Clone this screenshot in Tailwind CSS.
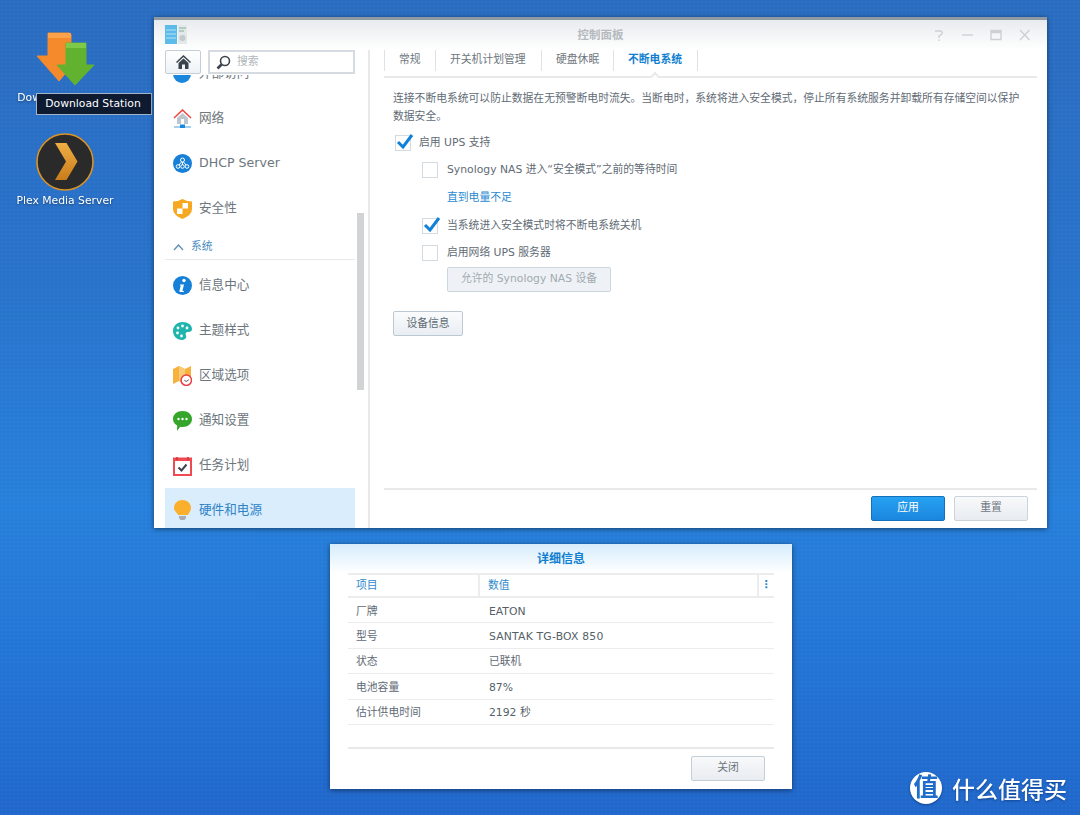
<!DOCTYPE html>
<html lang="zh-CN">
<head>
  <meta charset="UTF-8" />
  <title>控制面板</title>
  <script src="https://cdn.jsdelivr.net/npm/@tailwindcss/browser@4"></script>
</head>
<body class="m-0 overflow-hidden">
  <div class="relative w-[1080px] h-[815px] overflow-hidden bg-[linear-gradient(180deg,#2a6cc0_0%,#2873cb_35%,#2780db_62%,#2272d3_85%,#2067cb_100%)] font-['DejaVu_Sans','Noto_Sans_CJK_SC',sans-serif] text-[10.8px] text-[#5f6b75]">
    <div class="absolute inset-0 bg-[radial-gradient(rgba(255,255,255,0.03)_1px,transparent_1px)] bg-[size:4px_4px]"></div>

    <!-- Desktop icons -->
    <div class="absolute left-0 top-[32px] w-[130px] flex flex-col items-center text-white text-[10.8px]">
      <svg class="w-[58px] h-[54px]" viewBox="0 0 58 54">
        <path d="M12 1h21a2 2 0 0 1 2 2v21h9L23 49 1 24h11z" fill="#f48a2b" stroke="#f48a2b" stroke-linejoin="round"/>
        <path d="M12 1h23v5H12z" fill="#fba24a"/>
        <path d="M30 11h20v22h8L39 53 21 33h9z" fill="#62b22f" stroke="#62b22f" stroke-linejoin="round"/>
        <path d="M30 11h20v5H30z" fill="#7fc948"/>
      </svg>
      <span class="mt-[5px] leading-[14px] whitespace-nowrap drop-shadow-[0_1px_1px_rgba(0,0,0,0.4)]">Download Station</span>
      <svg class="mt-[28px] w-[58px] h-[58px]" viewBox="0 0 58 58">
        <defs>
          <linearGradient id="plexChevron" x1="0" y1="0" x2="0" y2="1">
            <stop offset="0" stop-color="#eeae45"/>
            <stop offset="1" stop-color="#c97c1b"/>
          </linearGradient>
        </defs>
        <circle cx="29" cy="29" r="28" fill="#2a2a2a" stroke="#d99327" stroke-width="1.6"/>
        <path d="M19 10h11.500l11 18.500-11 18.500H19l11-18.500z" fill="url(#plexChevron)"/>
      </svg>
      <span class="mt-[3px] leading-[14px] whitespace-nowrap drop-shadow-[0_1px_1px_rgba(0,0,0,0.4)]">Plex Media Server</span>
    </div>
    <div class="absolute left-[36px] top-[93px] w-[116px] h-[22px] pr-[2px] bg-[#0d1a30] border border-[#a3b4cb] text-white text-[10.8px] leading-[20px] text-center whitespace-nowrap">Download Station</div>

    <!-- Control panel window -->
    <div class="absolute left-[154px] top-[17px] w-[893px] h-[511px] bg-white border-t-[3px] border-[#8f9aa3] shadow-[0_1px_5px_rgba(0,0,0,0.5)] flex flex-col overflow-hidden">
      <div class="relative h-[30px] shrink-0 bg-[linear-gradient(180deg,#e8ebee,#ffffff)]">
        <svg class="absolute left-[11px] top-[5px] w-[22px] h-[19px]" viewBox="0 0 22 19">
          <rect width="12" height="19" fill="#5cbbe9"/>
          <path d="M1 5h10M1 9h10M1 13h10" stroke="#b4e1f6"/>
          <rect x="13" width="9" height="19" fill="#e3e8e9"/>
          <path d="M14 3h7M14 6h5" stroke="#7fb09c"/>
          <circle cx="17.500" cy="13" r="3" fill="#c2cace"/>
        </svg>
        <div class="text-center font-bold text-[#b5babf] text-[11.5px] leading-[30px]">控制面板</div>
        <svg class="absolute left-[778px] top-[8px] w-[100px] h-[14px]" viewBox="0 0 100 14" fill="none" stroke="#cdd1d4" stroke-width="1.4">
          <path d="M3 3h5.500a1.800 1.800 0 0 1 1 3.300L7 8v2M7 11.500V13"/>
          <path d="M30 7h11"/>
          <path d="M59 2.500h10v9H59z"/><path d="M59 4h10" stroke-width="2.500"/>
          <path d="M88 2l9.500 10M97.500 2L88 12"/>
        </svg>
      </div>

      <div class="flex flex-1 min-h-0">
        <!-- Sidebar -->
        <aside class="relative w-[216px] shrink-0 border-r-2 border-[#e8e9ea] overflow-hidden text-[12.6px] text-[#6d767d]">
          <ul class="absolute left-[11px] top-[0px] w-[190px]">
            <li class="h-[45px] flex items-center gap-[8px] pl-[8px] mt-[1px]">
              <span class="w-[18px] h-[18px] rounded-full bg-[#1b87dc]"></span>外部访问
            </li>
            <li class="h-[45px] flex items-center gap-[7px] pl-[8px]">
              <svg class="w-[19px] h-[20px]" viewBox="0 0 19 20"><path d="M1 9l8.500-8L18 9" fill="none" stroke="#ef4b45" stroke-width="1.600"/><path d="M4 9l5.500-5L15 9v6H4z" fill="#bcc6cf"/><rect x="8" y="10" width="3" height="5" fill="#fff"/><path d="M1 18h17" stroke="#4aa0dc"/><rect x="7" y="15.500" width="5" height="3.500" fill="#1b87dc"/></svg>
              网络
            </li>
            <li class="h-[45px] flex items-center gap-[7px] pl-[8px]">
              <svg class="w-[19px] h-[19px]" viewBox="0 0 19 19"><circle cx="9.500" cy="9.500" r="9.500" fill="#1680d8"/><g fill="none" stroke="#fff"><circle cx="9.500" cy="6" r="2"/><circle cx="5" cy="12.500" r="1.800"/><circle cx="9.500" cy="12.500" r="1.800"/><circle cx="14" cy="12.500" r="1.800"/><path d="M8.500 8L6 11M10.500 8l2.500 3M9.500 8v3"/></g></svg>
              DHCP Server
            </li>
            <li class="h-[45px] flex items-center gap-[7px] pl-[8px]">
              <svg class="w-[19px] h-[20px]" viewBox="0 0 19 20"><path d="M0 2.500Q5 2.500 9.500 0 14 2.500 19 2.500V10q0 6-9.500 10Q0 16 0 10z" fill="#f6a821"/><path d="M9.500 4h5.500v5.500H9.500zM4 9.500h5.500V15H4z" fill="#fff"/></svg>
              安全性
            </li>
            <li class="h-[29px] mb-[3px] pt-[5px] flex items-center border-b border-[#e6e8ea] text-[10.8px] text-[#4a8bbd] pl-[8px] gap-[7px]">
              <svg class="w-[11px] h-[7px]" viewBox="0 0 11 7"><path d="M1 6l4.500-5L10 6" fill="none" stroke="#5b8fb4" stroke-width="1.300"/></svg>
              系统
            </li>
            <li class="h-[45px] flex items-center gap-[7px] pl-[8px]">
              <svg class="w-[19px] h-[19px]" viewBox="0 0 19 19"><circle cx="9.500" cy="9.500" r="9.500" fill="#1680d8"/><circle cx="11" cy="4.500" r="1.700" fill="#fff"/><path d="M7 8.500h4l-1.500 6q0 .8 1.500.5l-.3 1H7.500q-1.500 0-1-1.500l1.300-5H7z" fill="#fff"/></svg>
              信息中心
            </li>
            <li class="h-[45px] flex items-center gap-[7px] pl-[8px]">
              <svg class="w-[19px] h-[18px]" viewBox="0 0 19 18"><path d="M9.500 0C15 0 19 3 19 7c0 3-3 3-4.500 3S12 11.500 13 13.500 12 18 9 18C4 18 0 14 0 9s4-9 9.500-9z" fill="#1fb5ad"/><g fill="#fff"><circle cx="5" cy="6" r="1.400"/><circle cx="9.500" cy="4" r="1.400"/><circle cx="14" cy="6" r="1.400"/><circle cx="4.500" cy="11" r="1.400"/><circle cx="8.500" cy="14" r="1.400"/></g></svg>
              主题样式
            </li>
            <li class="h-[45px] flex items-center gap-[7px] pl-[8px]">
              <svg class="w-[19px] h-[20px]" viewBox="0 0 19 20"><path d="M0 3l6-3v15l-6 3zM6 0l6 3v15l-6-3zM12 3l6-3v15l-6 3z" fill="#f7b13d"/><path d="M6 0l6 3v15l-6-3z" fill="#fbca76"/><circle cx="13.300" cy="14.200" r="5.200" fill="#fff" stroke="#ea4048" stroke-width="1.500"/><path d="M11.300 14.200l2 1.300 2.500-1.800" fill="none" stroke="#555"/></svg>
              区域选项
            </li>
            <li class="h-[45px] flex items-center gap-[7px] pl-[8px]">
              <svg class="w-[19px] h-[20px]" viewBox="0 0 19 20"><path d="M9.500 0C15 0 19 3.500 19 8s-4 8-9.500 8c-.8 0-1.500 0-2.300-.2L4 20l.2-5.500C1.500 13 0 10.700 0 8 0 3.500 4 0 9.500 0z" fill="#36a62a"/><g fill="#fff"><circle cx="5.500" cy="8" r="1.200"/><circle cx="9.500" cy="8" r="1.200"/><circle cx="13.500" cy="8" r="1.200"/></g></svg>
              通知设置
            </li>
            <li class="h-[45px] flex items-center gap-[7px] pl-[8px]">
              <svg class="w-[19px] h-[20px]" viewBox="0 0 19 20"><rect x="1" y="2.500" width="17" height="16.500" fill="#fff" stroke="#ee4a50" stroke-width="2"/><rect y="2" width="19" height="3" fill="#ee4a50"/><path d="M4 1v3M15 1v3" stroke="#c9353b" stroke-width="1.500"/><path d="M5.500 11.500l3 3 5-6" fill="none" stroke="#3d4650" stroke-width="2"/></svg>
              任务计划
            </li>
            <li class="h-[40px] pt-[5px] flex items-center gap-[8px] pl-[9px] bg-[#d9edfd] text-[#2f83c6]">
              <svg class="w-[17px] h-[21px]" viewBox="0 0 17 21"><path d="M8.500 0C13 0 17 3 17 8c0 3-2 4.500-3 7H4c-1-2.500-4-4-4-7 0-5 4-8 8.500-8z" fill="#fbb02d"/><path d="M5 16h7v2l-1.500 2h-4L5 18z" fill="#a7adb2"/></svg>
              硬件和电源
            </li>
          </ul>
          <!-- Home and search sit on top of the scrolled list -->
          <div class="absolute left-0 top-0 w-full h-[25px] bg-white flex items-start pl-[11px] gap-[7px]">
            <div class="w-[36px] h-[24px] flex items-center justify-center rounded-[2px] border border-[#c3ced6] bg-[linear-gradient(180deg,#ffffff,#eef2f6)]">
              <svg class="w-[15px] h-[14px]" viewBox="0 0 15 14"><path d="M7.500 0L15 7l-1 1-6.500-6L1 8 0 7z" fill="#3a434b"/><path d="M2.500 8l5-4.500 5 4.500v6H9V9.500H6V14H2.500z" fill="#3a434b"/></svg>
            </div>
            <div class="w-[147px] h-[24px] border-2 border-[#d5dbe0] flex items-center pl-[6px] gap-[6px] text-[#b1b6bb] text-[10.8px]">
              <svg class="w-[15px] h-[15px]" viewBox="0 0 15 15" fill="none" stroke="#3a434b"><circle cx="9" cy="6" r="4.500" stroke-width="1.600"/><path d="M5.500 9.500L1.500 13.500" stroke-width="2.600"/></svg>
              搜索
            </div>
          </div>
          <div class="absolute left-[203px] top-[163px] w-[7px] h-[177px] bg-[#d2d3d4]"></div>
        </aside>

        <!-- Right pane -->
        <main class="flex-1 min-w-0 flex flex-col pl-[14px] pr-[10px]">
          <div class="h-[28px] shrink-0 flex items-start border-b-2 border-[#e8e9ea] text-[#6d767d]">
            <span class="h-[21px] flex items-center border-l border-[#dfe2e4] pl-[14px] pr-[14px] w-[51px]">常规</span>
            <span class="h-[21px] flex items-center border-l border-[#dfe2e4] pl-[14px] w-[106px]">开关机计划管理</span>
            <span class="h-[21px] flex items-center border-l border-[#dfe2e4] pl-[14px] w-[72px]">硬盘休眠</span>
            <span class="relative h-[21px] flex items-center border-x border-[#dfe2e4] pl-[14px] w-[85px] font-bold text-[#107fd0]">不断电系统
              <i class="absolute left-[38px] top-[23px] w-[6px] h-[6px] rotate-45 bg-white border-l-2 border-t-2 border-[#e8e9ea]"></i>
            </span>
          </div>
          <div class="flex-1 min-h-0 pl-[9px] pt-[12px]">
            <p class="w-[632px] leading-[18px]">连接不断电系统可以防止数据在无预警断电时流失。当断电时，系统将进入安全模式，停止所有系统服务并卸载所有存储空间以保护数据安全。</p>
            <label class="mt-[8px] ml-[2px] h-[18px] flex items-center gap-[8px]">
              <span class="relative w-[16px] h-[16px] border border-[#d3dae0] bg-white">
                <svg class="absolute left-[0px] top-[-2px] w-[18px] h-[16px]" viewBox="0 0 18 16"><path d="M2 8l5 5 9-12" fill="none" stroke="#0f81d8" stroke-width="3"/></svg>
              </span>启用 UPS 支持
            </label>
            <div class="pl-[29px]">
              <label class="mt-[9px] h-[18px] flex items-center gap-[9px]">
                <span class="w-[16px] h-[16px] border border-[#d3dae0] bg-white"></span>Synology NAS 进入“安全模式”之前的等待时间
              </label>
              <a class="block mt-[10px] ml-[25px] leading-[18px] text-[#2a8ad2]">直到电量不足</a>
              <label class="mt-[10px] h-[18px] flex items-center gap-[9px]">
                <span class="relative w-[16px] h-[16px] border border-[#d3dae0] bg-white">
                  <svg class="absolute left-[0px] top-[-2px] w-[18px] h-[16px]" viewBox="0 0 18 16"><path d="M2 8l5 5 9-12" fill="none" stroke="#0f81d8" stroke-width="3"/></svg>
                </span>当系统进入安全模式时将不断电系统关机
              </label>
              <label class="mt-[9px] h-[18px] flex items-center gap-[9px]">
                <span class="w-[16px] h-[16px] border border-[#d3dae0] bg-white"></span>启用网络 UPS 服务器
              </label>
              <button class="block mt-[5px] ml-[25px] w-[164px] h-[25px] rounded-[2px] border border-[#ccd6de] bg-[#eef2f6] text-[#a3aab0]">允许的 Synology NAS 设备</button>
            </div>
            <button class="block mt-[19px] w-[70px] h-[25px] pt-[1px] rounded-[2px] border border-[#bcc8d2] bg-[linear-gradient(180deg,#fafbfc,#e9eef3)] text-[#5f6b75]">设备信息</button>
          </div>
          <div class="h-[40px] shrink-0 border-t-2 border-[#e8e9ea] flex justify-end items-start pt-[6px] pr-[9px] gap-[9px]">
            <button class="w-[74px] h-[25px] rounded-[2px] border border-[#1470b8] bg-[linear-gradient(180deg,#27a2f2,#1b86de)] text-white">应用</button>
            <button class="w-[74px] h-[25px] rounded-[2px] border border-[#ccd3da] bg-[linear-gradient(180deg,#f8f9fa,#e8ecf1)] text-[#6d767d]">重置</button>
          </div>
        </main>
      </div>
    </div>

    <!-- Details dialog -->
    <div class="absolute left-[330px] top-[544px] w-[462px] h-[245px] bg-white shadow-[0_1px_5px_rgba(0,0,0,0.5)] flex flex-col">
      <div class="h-[29px] shrink-0 bg-[linear-gradient(180deg,#d6ecfb,#ffffff)] text-center font-bold text-[12px] leading-[30px] text-[#107fd0]">详细信息</div>
      <div class="mx-[18px]">
        <div class="h-[25px] flex items-center border-y-2 border-[#ebeced] text-[#2f8acb]">
          <span class="w-[132px] h-full flex items-center border-r-2 border-[#ebeced] pl-[8px] pt-[2px]">项目</span>
          <span class="flex-1 h-full flex items-center border-r-2 border-[#ebeced] pl-[8px] pt-[2px]">数值</span>
          <span class="w-[15px] text-center font-bold leading-none">⋮</span>
        </div>
        <div class="h-[25.4px] pt-[3px] flex items-center border-b border-[#ebeced]"><span class="w-[141px] pl-[8px]">厂牌</span><span class="text-[#555f68]">EATON</span></div>
        <div class="h-[25.4px] pt-[3px] flex items-center border-b border-[#ebeced]"><span class="w-[141px] pl-[8px]">型号</span><span class="text-[#555f68] tracking-[0.2px]">SANTAK TG-BOX 850</span></div>
        <div class="h-[25.4px] pt-[2px] flex items-center border-b border-[#ebeced]"><span class="w-[141px] pl-[8px]">状态</span><span>已联机</span></div>
        <div class="h-[25.4px] pt-[3px] flex items-center border-b border-[#ebeced]"><span class="w-[141px] pl-[8px]">电池容量</span><span class="text-[#555f68]">87%</span></div>
        <div class="h-[25.4px] pt-[2px] flex items-center border-b border-[#ebeced]"><span class="w-[141px] pl-[8px]">估计供电时间</span><span class="text-[#555f68]">2192 秒</span></div>
      </div>
      <div class="mx-[18px] mt-[22px] border-t-2 border-[#e8e9ea] flex justify-end pt-[7px] pr-[9px]">
        <button class="w-[74px] h-[25px] rounded-[2px] border border-[#c3ced6] bg-[linear-gradient(180deg,#f8f9fa,#e8ecf1)] text-[#6d767d]">关闭</button>
      </div>
    </div>

    <!-- Watermark -->
    <div class="absolute left-[910px] top-[772px] flex items-center gap-[10px] text-white drop-shadow-[0_1px_1px_rgba(0,40,100,0.6)]">
      <span class="w-[32px] h-[32px] rounded-full bg-white text-[#1f6ccb] text-[25px] leading-[31px] font-bold text-center overflow-hidden">值</span>
      <span class="text-[23px] leading-[32px] font-medium font-['Noto_Sans_CJK_SC',sans-serif]">什么值得买</span>
    </div>
  </div>
</body>
</html>
